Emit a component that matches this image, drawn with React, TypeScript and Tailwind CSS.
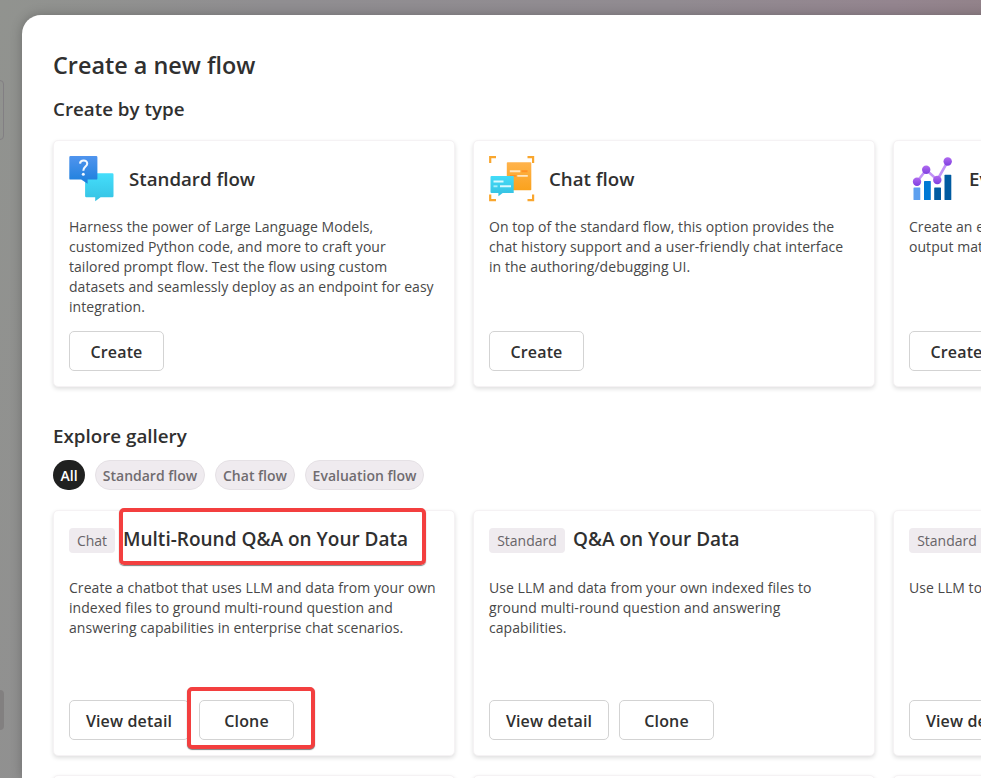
import type { ReactNode } from "react";

const StandardIcon = () => (
  <svg width="46" height="46" viewBox="0 0 46 46" className="shrink-0">
    <defs>
      <linearGradient id="sBlue" x1="0" y1="0" x2="0" y2="1">
        <stop offset="0" stopColor="#5094ee" />
        <stop offset="1" stopColor="#1b7fdc" />
      </linearGradient>
      <linearGradient id="sCyan" x1="0" y1="0" x2="0" y2="1">
        <stop offset="0" stopColor="#45defb" />
        <stop offset="1" stopColor="#35c2e3" />
      </linearGradient>
    </defs>
    <path d="M17.3 17.3h26a1.2 1.2 0 0 1 1.2 1.2v21.6a1.2 1.2 0 0 1-1.2 1.2H31.6l-5.4 4v-4h-8.900a1.200 1.200 0 0 1-1.200-1.200V18.500a1.200 1.200 0 0 1 1.200-1.200z" fill="url(#sCyan)" />
    <path d="M1.500 0h25.700a1.200 1.200 0 0 1 1.200 1.200V22.400a1.200 1.200 0 0 1-1.200 1.200H18.600v4.200l-6.400-4.200H1.500a1.200 1.200 0 0 1-1.200-1.200V1.200A1.200 1.200 0 0 1 1.500 0z" fill="url(#sBlue)" />
    <path d="M11 7.600c.3-4.200 7.400-4.200 7.200.1-.1 2.900-3.900 2.900-3.900 7" fill="none" stroke="#f2f8ff" strokeWidth="2.100" />
    <circle cx="14.300" cy="18.300" r="1.500" fill="#f2f8ff" />
  </svg>
);

const ChatIcon = () => (
  <svg width="46" height="46" viewBox="0 0 46 46" className="shrink-0">
    <defs>
      <linearGradient id="cOrange" x1="0" y1="0" x2="0" y2="1">
        <stop offset="0" stopColor="#ffb34c" />
        <stop offset="1" stopColor="#faa21d" />
      </linearGradient>
      <linearGradient id="cCyan" x1="0" y1="0" x2="0" y2="1">
        <stop offset="0" stopColor="#43dcf8" />
        <stop offset="1" stopColor="#35bfe0" />
      </linearGradient>
    </defs>
    <path d="M1.200 7V1.200H7M38.500 1.200h5.600V7M1.200 38.500v5.600H7M38.500 44.100h5.600v-5.600" fill="none" stroke="#f9a62e" strokeWidth="2.200" />
    <rect x="17.800" y="6.200" width="24.500" height="28" rx=".8" fill="url(#cOrange)" />
    <path d="M20.800 15.200h10.500M28.300 19.900h10.500" stroke="#ffe7c2" strokeWidth="1.900" />
    <path d="M32.500 15.200h6M20.800 19.900h6" stroke="#ff9224" strokeWidth="1.900" />
    <path d="M2.500 20h22.200v17h-11l-4.300 3.200V37H2.500a1 1 0 0 1-1-1V21a1 1 0 0 1 1-1z" fill="url(#cCyan)" />
    <path d="M4.500 25.500h10M11 30.300h11" stroke="#d8f9ff" strokeWidth="1.900" />
    <path d="M4.500 30.300h4" stroke="#a5effb" strokeWidth="1.900" />
  </svg>
);

const EvaluationIcon = () => (
  <svg width="46" height="46" viewBox="0 0 46 46" className="shrink-0">
    <defs>
      <linearGradient id="eDot" x1="0" y1="0" x2="0" y2="1">
        <stop offset="0" stopColor="#b06af0" />
        <stop offset="1" stopColor="#7f3fe0" />
      </linearGradient>
    </defs>
    <rect x="4.500" y="31.500" width="6.800" height="12.500" rx=".6" fill="#5ea0ef" />
    <rect x="15" y="25" width="6.800" height="19" rx=".6" fill="#0078d4" />
    <rect x="25.200" y="31.500" width="6.800" height="12.500" rx=".6" fill="#005ba1" />
    <rect x="35.500" y="18.800" width="6.800" height="25.200" rx=".6" fill="#005ba1" />
    <path d="M8 25.800L17.200 13.800 28.300 24 38.700 5.500" fill="none" stroke="#c293f7" strokeWidth="2.600" />
    <g fill="url(#eDot)">
      <circle cx="8" cy="25.800" r="4.200" />
      <circle cx="17.200" cy="13.800" r="4.200" />
      <circle cx="28.300" cy="24" r="4.200" />
      <circle cx="38.700" cy="5.500" r="4.200" />
    </g>
  </svg>
);

const Button = ({ children, className }: { children: ReactNode; className: string }) => (
  <button className={`h-10 shrink-0 whitespace-nowrap rounded-[5px] border border-[#d3d3d3] bg-white pt-px text-[16px] font-semibold tracking-[0.15px] text-[#303030] ${className}`}>
    {children}
  </button>
);

const cardClass =
  "flex w-[402px] shrink-0 flex-col rounded-[5px] border border-[#f5f2f4] bg-white px-[15px] shadow-[0_2px_4px_rgba(0,0,0,0.13)]";

const Description = ({ lines }: { lines: string[] }) => (
  <div className="whitespace-nowrap text-[14px] leading-5 tracking-[0.05px] text-[#484848]">
    {lines.map((line) => (
      <p key={line}>{line}</p>
    ))}
  </div>
);

const TypeCard = ({ icon, title, lines }: { icon: ReactNode; title: string; lines: string[] }) => (
  <article className={`${cardClass} h-[247px] pt-[15px]`}>
    <header className="flex h-[46px] items-center gap-[14px]">
      {icon}
      <h3 className="whitespace-nowrap text-[18.700px] font-semibold text-[#303030]">{title}</h3>
    </header>
    <div className="mt-[15px] h-[114px]">
      <Description lines={lines} />
    </div>
    <Button className="w-[95px]">Create</Button>
  </article>
);

type GalleryProps = { tag: string; tagWidth: string; title: string; lines: string[]; marked?: boolean };

const GalleryCard = ({ tag, tagWidth, title, lines, marked }: GalleryProps) => (
  <article className={`${cardClass} h-[246px] pt-[13px]`}>
    <header className="flex h-[30px] items-center gap-2">
      <span className={`mt-[3px] flex h-[25px] shrink-0 items-center justify-center rounded bg-[#efebef] text-[14px] font-medium text-[#686468] ${tagWidth}`}>
        {tag}
      </span>
      <h3 className="relative whitespace-nowrap text-[19px] font-semibold text-[#303030]">
        {title}
        {marked && (
          <span className="absolute -left-[4px] -top-[17px] h-[57px] w-[307px] rounded-[5px] border-4 border-[#f33f3f] shadow-[0_1px_1px_rgba(0,0,0,0.5)]" />
        )}
      </h3>
    </header>
    <div className="mt-[24px] h-[122px]">
      <Description lines={lines} />
    </div>
    <div className="flex gap-[10px]">
      <Button className="w-[120px]">View detail</Button>
      <div className="relative">
        {marked && (
          <span className="absolute -left-[12px] -top-[13px] h-[62px] w-[128px] rounded-[5px] border-4 border-[#f33f3f] bg-white shadow-[0_1px_1px_rgba(0,0,0,0.5)]" />
        )}
        <Button className="relative w-[95px]">Clone</Button>
      </div>
    </div>
  </article>
);

const pill = "flex h-[30px] shrink-0 items-center justify-center rounded-full text-[14px] font-semibold";

export default function App() {
  return (
    <div className="relative h-[778px] w-[981px] overflow-hidden bg-[linear-gradient(100deg,#91938f_0%,#908e91_25%,#918b91_60%,#94858f_80%,#907f83_100%)] pl-[22px] pt-[15px] font-['Open_Sans','Noto_Sans',sans-serif]">
      <div className="absolute -left-2 top-[80px] h-[60px] w-3 rounded border border-[#827f83]" />
      <div className="absolute -left-2 top-[690px] h-[40px] w-3 rounded bg-[#828080]" />
      <main className="relative h-[763px] w-[1300px] overflow-visible rounded-tl-[19px] bg-white pl-[31px] shadow-[0_0_12px_rgba(0,0,0,0.25)]">
        <h1 className="h-[75px] pt-[35px] text-[23.400px] font-semibold leading-[30px] text-[#303030]">Create a new flow</h1>
        <h2 className="h-[50px] pt-[6px] text-[18.800px] font-semibold leading-[26px] text-[#303030]">Create by type</h2>
        <section className="flex gap-[18px]">
          <TypeCard
            icon={<StandardIcon />}
            title="Standard flow"
            lines={[
              "Harness the power of Large Language Models,",
              "customized Python code, and more to craft your",
              "tailored prompt flow. Test the flow using custom",
              "datasets and seamlessly deploy as an endpoint for easy",
              "integration.",
            ]}
          />
          <TypeCard
            icon={<ChatIcon />}
            title="Chat flow"
            lines={[
              "On top of the standard flow, this option provides the",
              "chat history support and a user-friendly chat interface",
              "in the authoring/debugging UI.",
            ]}
          />
          <TypeCard
            icon={<EvaluationIcon />}
            title="Evaluation flow"
            lines={["Create an evaluation flow to measure how well the", "output matches the expected criteria and goals."]}
          />
        </section>
        <h2 className="h-[73px] pt-[36px] text-[18.800px] font-semibold leading-[26px] text-[#303030]">Explore gallery</h2>
        <nav className="flex gap-[10px]">
          <span className={`${pill} w-[32px] bg-[#202120] text-white`}>All</span>
          <span className={`${pill} w-[110px] border border-[#e5e1e5] bg-[#efebef] text-[#706c70]`}>Standard flow</span>
          <span className={`${pill} w-[80px] border border-[#e5e1e5] bg-[#efebef] text-[#706c70]`}>Chat flow</span>
          <span className={`${pill} w-[119px] border border-[#e5e1e5] bg-[#efebef] text-[#706c70]`}>Evaluation flow</span>
        </nav>
        <section className="mt-5 grid grid-cols-[402px_402px_402px] gap-x-[18px] gap-y-[19px]">
          <GalleryCard
            tag="Chat"
            tagWidth="w-[46px]"
            title="Multi-Round Q&A on Your Data"
            marked
            lines={[
              "Create a chatbot that uses LLM and data from your own",
              "indexed files to ground multi-round question and",
              "answering capabilities in enterprise chat scenarios.",
            ]}
          />
          <GalleryCard
            tag="Standard"
            tagWidth="w-[76px]"
            title="Q&A on Your Data"
            lines={[
              "Use LLM and data from your own indexed files to",
              "ground multi-round question and answering",
              "capabilities.",
            ]}
          />
          <GalleryCard tag="Standard" tagWidth="w-[76px]" title="Web Classification" lines={["Use LLM to classify URLs into multiple categories."]} />
          <div className={`${cardClass} h-5`} />
          <div className={`${cardClass} h-5`} />
          <div className={`${cardClass} h-5`} />
        </section>
      </main>
    </div>
  );
}
